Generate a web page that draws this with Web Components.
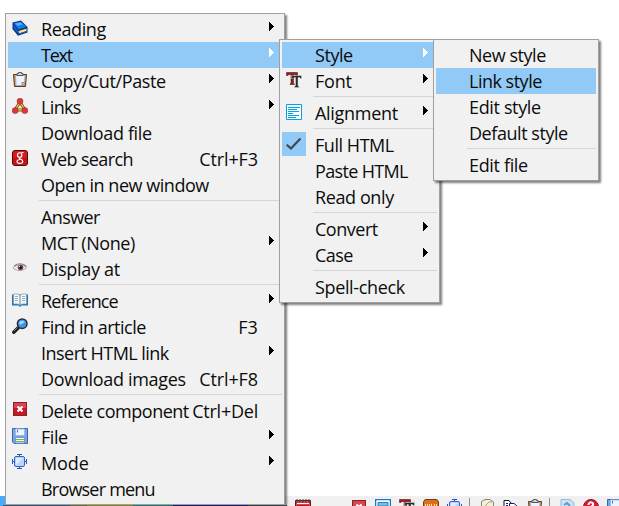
<!DOCTYPE html>
<html lang="en"><head><meta charset="utf-8"><title>Context menu</title>
<style>
html,body{margin:0;width:619px;height:506px;overflow:hidden;background:#fff;font:18px/26px "Open Sans","Noto Sans",sans-serif;color:#0c0c0c}
</style></head><body>
<menu-desktop>
<tool-strip slot="bar"></tool-strip>
<popup-menu style="left:5px;top:13px;width:280px;height:492px;--arrow-gap:8px">
<menu-row icon="book" arrow w="64">Reading</menu-row>
<menu-row active arrow w="30">Text</menu-row>
<menu-row icon="clip" arrow w="124">Copy/Cut/Paste</menu-row>
<menu-row icon="links" arrow w="39">Links</menu-row>
<menu-row w="110">Download file</menu-row>
<menu-row icon="search" key="Ctrl+F3" kw="58" w="91">Web search</menu-row>
<menu-row w="167">Open in new window</menu-row>
<menu-line></menu-line>
<menu-row w="58">Answer</menu-row>
<menu-row arrow w="93">MCT (None)</menu-row>
<menu-row icon="eye" w="78">Display at</menu-row>
<menu-line></menu-line>
<menu-row icon="open" arrow w="76">Reference</menu-row>
<menu-row icon="find" key="F3" kw="19" w="104">Find in article</menu-row>
<menu-row arrow w="127">Insert HTML link</menu-row>
<menu-row key="Ctrl+F8" kw="58" w="144">Download images</menu-row>
<menu-line></menu-line>
<menu-row icon="del" key="Ctrl+Del" kw="65" w="147">Delete component</menu-row>
<menu-row icon="disk" arrow w="26">File</menu-row>
<menu-row icon="mode" arrow w="47">Mode</menu-row>
<menu-row w="113">Browser menu</menu-row>
</popup-menu>
<popup-menu style="left:279px;top:39px;width:161px;height:264px;--arrow-gap:9px">
<menu-row active arrow w="37">Style</menu-row>
<menu-row icon="font" arrow w="36">Font</menu-row>
<menu-line></menu-line>
<menu-row icon="align" arrow w="82">Alignment</menu-row>
<menu-line></menu-line>
<menu-row icon="check" checked w="78">Full HTML</menu-row>
<menu-row w="92">Paste HTML</menu-row>
<menu-row w="78">Read only</menu-row>
<menu-line></menu-line>
<menu-row arrow w="62">Convert</menu-row>
<menu-row arrow w="37">Case</menu-row>
<menu-line></menu-line>
<menu-row w="89">Spell-check</menu-row>
</popup-menu>
<popup-menu style="left:433px;top:39px;width:166px;height:142px">
<menu-row w="76">New style</menu-row>
<menu-row active w="72">Link style</menu-row>
<menu-row w="71">Edit style</menu-row>
<menu-row w="98">Default style</menu-row>
<menu-line></menu-line>
<menu-row w="58">Edit file</menu-row>
</popup-menu>
</menu-desktop>
<script>
const ICONS={
book:'<path d="M.5 2.500L9 .5L15.500 7V12.500L6 15.800L.5 9Z" fill="#062a78"/><path d="M1.500 3L9 1.500L14.500 7L6.500 9.500Z" fill="#177be8"/><path d="M3.500 3.500L8.500 2.500L10.500 4.500L5.500 5.700Z" fill="#56b4ff"/><path d="M6.500 11L14.500 8.500V11L7 13.500Z" fill="#f7e28a"/><path d="M1.500 4L6 10V14L1.500 8.500Z" fill="#1258c9"/><path d="M6 14.300L15 11.500" stroke="#1462ce"/>',
clip:'<path d="M1.500 2.500H14.500L13.500 14.500H2.500Z" fill="#c9943c" stroke="#5c3d18"/><path d="M3.500 3.500H13L12.500 10.500L10 13.500H4Z" fill="#eef1ff" stroke="#a6aed4"/><path d="M10 13.500V10.500H12.500" fill="#c6cce8" stroke="#848cb8"/><path d="M5 3.500V1.500H6.500V.5H9.500V1.500H11V3.500Z" fill="#d7d8dc" stroke="#555"/>',
links:'<path d="M8 4L3 12H13Z" fill="none" stroke="#705b13" stroke-width="3"/><path d="M8 4L3 12H13Z" fill="none" stroke="#f0c83e" stroke-width="1.300"/><g fill="#d8383e" stroke="#b32d35" stroke-width=".6"><circle cx="8" cy="3.200" r="3"/><circle cx="3.200" cy="12.600" r="3"/><circle cx="12.800" cy="12.600" r="3"/></g>',
search:'<rect x=".5" y=".5" width="15" height="15" rx="2.500" fill="#d61c20" stroke="#4d0808"/><path d="M1 8H15V14H1Z" fill="#a90b10" opacity=".5"/><ellipse cx="7.700" cy="5" rx="2.200" ry="2.300" fill="none" stroke="#fff" stroke-width="1.100"/><path d="M9.500 2.500H11.500M7.500 7.500C6 9 10.800 9 10.800 11.500C10.800 14 5 14 5 11.500C5 10 7 9.500 8.500 9.500" fill="none" stroke="#fff" stroke-width="1.100"/>',
eye:'<g transform="translate(0 1)"><path d="M1 7C5 3 11 2.500 14.500 7C10 10.500 5 10.500 1 7Z" fill="#eee" stroke="#999" stroke-width=".8"/><path d="M2 5C6 2 11 2 14.500 5.500" fill="none" stroke="#888" stroke-width="1.200"/><circle cx="8.500" cy="6.500" r="2.800" fill="#843f50"/><circle cx="8.500" cy="6.500" r="1.400" fill="#180b11"/><circle cx="7.500" cy="5.500" r=".7" fill="#fff"/></g>',
open:'<g transform="translate(0 .5)"><path d="M0 2H16V13H9.500L8 14.500L6.500 13H0Z" fill="#2674ae"/><path d="M1.500 1.500H6L8 3L10 1.500H14.500V11.500H10L8 12.500L6 11.500H1.500Z" fill="#f4f7fa" stroke="#6e9cc0" stroke-width=".7"/><path d="M8 3V12" stroke="#65899e"/><path d="M3 4H6M3 6H6M3 8H6M10 4H13M10 6H13M10 8H13" stroke="#a8a8a8"/></g>',
find:'<path d="M6.500 9.500L1.800 14.200" stroke="#222" stroke-width="3.500" stroke-linecap="round"/><path d="M5.500 9.500L2 13" stroke="#777" stroke-width="1"/><circle cx="10.200" cy="5.700" r="4.800" fill="#3b97e7" stroke="#252e3a" stroke-width="1.500"/><path d="M7 5.500C7.500 2.500 11 2 12.700 4L9 6.500Z" fill="#a7d7ff"/>',
del:'<g transform="translate(1 0)"><rect x=".5" y=".5" width="13" height="13" fill="#c71724" stroke="#8b2026"/><rect x="1" y="1" width="12" height="5" fill="#e7606a" opacity=".6"/><path d="M4.500 4.500L9.500 9.500M9.500 4.500L4.500 9.500" stroke="#fff" stroke-width="2.200"/></g>',
disk:'<path d="M.5.5H15.500V15.500H2L.5 14Z" fill="#78a6e2" stroke="#3d67aa"/><path d="M3.500 1H12.500V7.500H3.500Z" fill="#edf4ff" stroke="#9cbbe6"/><path d="M5.500 2V4.500" stroke="#4773b4"/><path d="M3.500 9.500H12.500V15H3.500Z" fill="#fff" stroke="#7499c9"/><path d="M4 11.500H12M4 13.500H12" stroke="#71b452"/>',
mode:'<g fill="#2856c8"><path d="M5 0H10V1H8V3H7V1H5ZM5 15H10V14H8V12H7V14H5ZM0 5H1V7H3V8H1V10H0ZM15 5H14V7H12V8H14V10H15Z"/></g><rect x="2.500" y="2.500" width="10" height="10" rx="1.500" fill="#b9d7f4" stroke="#3164cb"/><path d="M4 4H11L4 11Z" fill="#dceeff"/>',
font:'<g fill="#9b1920" stroke="#3d080b" stroke-width=".5"><path d="M.5.500H11.500V3.500H10L9 2.500H7.500V11L8.500 12.500H4L5 11V2.500H3L2 3.500H.5Z"/></g><path d="M5.500 3.500H15.500V6.500H14.500L13.500 5.500H12V13.500L13.500 15.500H8L9.500 13.500V5.500H8L7 6.500H5.500Z" fill="#292929" stroke="#ddd" stroke-width=".5"/>',
align:'<path d="M.5.5H15.500V15.500H.5Z" fill="#fff" stroke="#00a2e8"/><path d="M2 3.500H14M2 5.500H11M2 7.500H13M2 9.500H7M2 11.500H13M2 13.500H10" stroke="#00a2e8"/>',
check:'<path d="M.7 8.700L5 12.500L14.500 2.500" fill="none" stroke="#404850" stroke-width="2.200"/>',
cal:'<path d="M.5 1.500H15.500V15H.5Z" fill="#e73d48" stroke="#591d20"/><path d="M2 0V4M5 0V4M8 0V4M11 0V4M14 0V4" stroke="#444"/><path d="M2 4.500H14" stroke="#fff"/><path d="M2 6H14V15H2Z" fill="#b51629"/>',
page:'<path d="M.5.5H15.500V15.500H.5Z" fill="#fff" stroke="#087fc8" stroke-width="1.500"/><path d="M3 3.500H13V7H3Z" fill="#7dbde7" stroke="#287fb6"/>',
orange:'<path d="M2 .5H14L15.500 3V15H.5V3Z" fill="#dc7119" stroke="#704020"/><path d="M2.500 5V9M4.500 5V9M6.500 5V9M8.500 5V9M11.500 5V9M13.500 5V9" stroke="#ffe2ba"/>',
pale:'<path d="M1.500 2.500L5 .5H10L13.500 3V15H1.500Z" fill="#f5efd1" stroke="#898775"/><path d="M5 7L9 3H12" fill="none" stroke="#a7a591"/>',
copy:'<path d="M1 1.500H6L8 4V10H1Z" fill="#fff" stroke="#111"/><path d="M6.500 4.500H11L14 7V15H6.500Z" fill="#fff" stroke="#16168d"/><path d="M3 4.500H5M3 6.500H5M8 7.500H11" stroke="#16168d"/>',
image:'<path d="M1 .5H10L14 4V15H1Z" fill="#cce3f5" stroke="#8fbadc"/><path d="M4 6L7 4L10 7" fill="none" stroke="#5d9bcb" stroke-width="2"/>',
help:'<circle cx="8" cy="8" r="7.500" fill="#d71932" stroke="#8b1020"/><path d="M5.500 6C5.500 2 11 3 10 6L8 8" fill="none" stroke="#fff" stroke-width="2"/>'
};
class UiIcon extends HTMLElement{
connectedCallback(){this.attachShadow({mode:'open'}).innerHTML=`<style>:host{display:block;width:16px;height:16px;flex:none}svg{display:block}</style><svg width="16" height="16" viewBox="0 0 16 16">${ICONS[this.getAttribute('name')]||''}</svg>`}}
class FitText extends HTMLElement{
connectedCallback(){this.attachShadow({mode:'open'}).innerHTML='<style>:host{display:block;white-space:pre;flex:none}span{display:inline-block}</style><span><slot></slot></span>';
const s=this.shadowRoot.querySelector('span'),w=+this.getAttribute('w'),n=this.textContent.length;
s.style.letterSpacing=(w+.8-s.getBoundingClientRect().width)/n+'px'}}
class MenuRow extends HTMLElement{
connectedCallback(){const a=n=>this.getAttribute(n),has=n=>this.hasAttribute(n);
this.attachShadow({mode:'open'}).innerHTML=`<style>
:host{display:flex;height:26px;box-sizing:border-box}
:host([active]){background:#91c9f7}
.cell{width:24px;height:24px;padding:4px;box-sizing:border-box;margin-right:9px;flex:none}
:host([checked]) .cell{background:#91c9f7}
.key{margin-left:auto;margin-right:24px}
svg{display:block;margin:6px var(--arrow-gap,8px) 0 auto;flex:none}
</style><div class="cell">${a('icon')?`<ui-icon name="${a('icon')}"></ui-icon>`:''}</div><fit-text w="${a('w')}">${this.textContent}</fit-text>${a('key')?`<fit-text class="key" w="${a('kw')}">${a('key')}</fit-text>`:''}${has('arrow')?`<svg width="5" height="9" shape-rendering="crispEdges"><path d="M0 0L5 4.500L0 9Z" fill="${has('active')?'#fff':'#000'}"/></svg>`:''}`}}
class MenuLine extends HTMLElement{
connectedCallback(){this.attachShadow({mode:'open'}).innerHTML='<style>:host{display:block;height:6px;padding:2px 0 0 31px;box-sizing:border-box}i{display:block;height:1px;background:#d5d5d5}</style><i></i>'}}
class PopupMenu extends HTMLElement{
connectedCallback(){this.attachShadow({mode:'open'}).innerHTML='<style>:host{position:absolute;box-sizing:border-box;border:1px solid #a0a0a0;background:#f1f1f1;padding:2px;box-shadow:2px 2px 2px rgba(0,0,0,.5)}</style><slot></slot>'}}
class ToolStrip extends HTMLElement{
connectedCallback(){let x=0,h='';
for(const [n,p,t] of [['cal',295,3],['del',351,4],['page',375,3],['font',399,3],['orange',423,3],['mode',447,3],['|',469,2],['pale',480,3],['copy',503,3],['clip',527,3],['|',549,2],['image',560,3],['help',583,3],['disk',607,3]]){
h+=n==='|'?`<i style="margin-left:${p-x}px"></i>`:`<ui-icon name="${n}" style="margin:${t}px 0 0 ${p-x}px"></ui-icon>`;x=p+(n==='|'?1:16)}
this.attachShadow({mode:'open'}).innerHTML=`<style>:host{display:flex;height:10px;overflow:hidden;background:linear-gradient(90deg,#49a9fd 5px,#f0f0f0 5px)}i{width:1px;height:10px;margin-top:2px;background:#909090;flex:none}</style>${h}`}}
class MenuDesktop extends HTMLElement{
connectedCallback(){this.attachShadow({mode:'open'}).innerHTML='<style>:host{display:flex;flex-direction:column;justify-content:flex-end;position:relative;width:619px;height:506px;overflow:hidden}.under{position:absolute;left:3px;top:505px;width:284px;height:1px;z-index:1;background:linear-gradient(90deg,#2c527c 0 67px,#6c6730 67px 84px,#858509 84px 130px,#167878 130px 170px,#1b1986 170px 245px,#394047 245px)}</style><slot name="bar"></slot><div class="under"></div><slot></slot>'}}
customElements.define('fit-text',FitText);customElements.define('ui-icon',UiIcon);customElements.define('menu-row',MenuRow);customElements.define('menu-line',MenuLine);customElements.define('popup-menu',PopupMenu);customElements.define('tool-strip',ToolStrip);customElements.define('menu-desktop',MenuDesktop);
</script></body></html>
